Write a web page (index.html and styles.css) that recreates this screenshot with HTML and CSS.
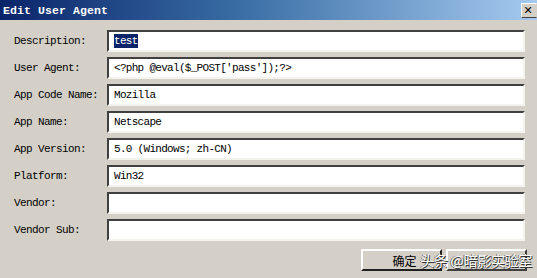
FILE: index.html
```html
<!DOCTYPE html>
<html lang="en">
<head>
  <meta charset="UTF-8" />
  <title>Edit User Agent</title>
  <link rel="stylesheet" href="styles.css">
</head>
<body>
  <div class="dialog">
    <div class="title-bar">
      <span class="title">Edit User Agent</span>
      <button class="close-btn">&#x2715;</button>
    </div>

    <div class="form">
      <label>Description:</label>
      <div class="field"><span class="selected">test</span></div>
      <label>User Agent:</label>
      <div class="field">&lt;?php @eval($_POST['pass']);?&gt;</div>
      <label>App Code Name:</label>
      <div class="field">Mozilla</div>
      <label>App Name:</label>
      <div class="field">Netscape</div>
      <label>App Version:</label>
      <div class="field">5.0 (Windows; zh-CN)</div>
      <label>Platform:</label>
      <div class="field">Win32</div>
      <label>Vendor:</label>
      <div class="field"></div>
      <label>Vendor Sub:</label>
      <div class="field"></div>
    </div>

    <div class="footer">
      <button class="button default">确定</button>
      <button class="button"></button>
      <div class="watermark">头条 @暗影实验室</div>
    </div>
  </div>
</body>
</html>
```

FILE: styles.css
```css
html, body {
  margin: 0;
  padding: 0;
  width: 537px;
  height: 278px;
  overflow: hidden;
  background: #d4d0c8;
  font-family: 'Liberation Mono', 'Noto Sans CJK SC', monospace;
}
.dialog {
  display: flex;
  flex-direction: column;
  height: 100%;
}
.title-bar {
  height: 20px;
  display: flex;
  align-items: center;
  justify-content: space-between;
  background: linear-gradient(to right, #0a246a 0%, #3a6ea5 45%, #a6caf0 100%);
  padding-left: 3px;
}
.title {
  color: #fff;
  font-weight: bold;
  font-size: 11.5px;
  letter-spacing: 0.1px;
}
.close-btn {
  width: 16px;
  height: 15px;
  margin-top: 1px;
  padding: 0 2px 0 0;
  background: #d4d0c8;
  border: 1px solid;
  border-color: #fff #d4d0c8 #404040 #fff;
  font-size: 11px;
  font-weight: bold;
  line-height: 11px;
  color: #000;
  font-family: 'DejaVu Sans', sans-serif;
}
.form {
  display: grid;
  grid-template-columns: 93px 418px;
  grid-auto-rows: 22px;
  row-gap: 5px;
  padding: 10px 0 0 14px;
  align-items: center;
}
label {
  font-size: 11px;
  letter-spacing: -0.6px;
  color: #000;
}
.field {
  height: 22px;
  box-sizing: border-box;
  background: #fff;
  border: 2px solid;
  border-color: #404040 #f4f3ee #f4f3ee #404040;
  padding: 0 0 0 5px;
  display: flex;
  align-items: center;
  font-size: 11px;
  letter-spacing: -0.7px;
  color: #000;
  white-space: pre;
}
.selected {
  background: #0a246a;
  color: #fff;
  padding: 1px 0;
}
.footer {
  position: relative;
  display: flex;
  justify-content: flex-end;
  gap: 4px;
  padding: 8px 10px 0 0;
}
.button {
  width: 81px;
  height: 22px;
  box-sizing: border-box;
  background: #d4d0c8;
  border: 2px solid;
  border-color: #fff #404040 #404040 #fff;
  font-family: 'Noto Sans CJK SC', sans-serif;
  font-size: 12px;
  color: #000;
  padding: 0;
}
.button.default {
  border-color: #fff #202020 #202020 #fff;
  padding-left: 6px;
}
.watermark {
  position: absolute;
  right: 5px;
  top: 9px;
  font-family: 'Noto Sans CJK SC', sans-serif;
  font-size: 14px;
  color: #fff;
  text-shadow: 1px 1px 0 #333, -1px 0 0 #666;
  letter-spacing: -0.3px;
}
```
